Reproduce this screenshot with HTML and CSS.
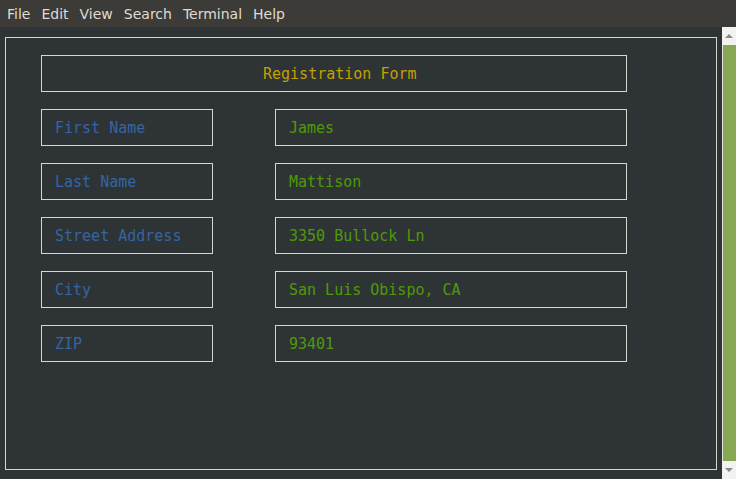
FILE: index.html
```html
<!DOCTYPE html>
<html>
<head>
<meta charset="utf-8">
<link rel="stylesheet" href="styles.css">
</head>
<body>
<div class="menubar">
  <span class="menu">File</span>
  <span class="menu">Edit</span>
  <span class="menu">View</span>
  <span class="menu">Search</span>
  <span class="menu">Terminal</span>
  <span class="menu">Help</span>
</div>
<div class="main">
  <div class="term">
    <div class="outer">
      <div class="box title">Registration Form</div>
      <div class="row"><div class="box label">First Name</div><div class="box value">James</div></div>
      <div class="row"><div class="box label">Last Name</div><div class="box value">Mattison</div></div>
      <div class="row"><div class="box label">Street Address</div><div class="box value">3350 Bullock Ln</div></div>
      <div class="row"><div class="box label">City</div><div class="box value">San Luis Obispo, CA</div></div>
      <div class="row"><div class="box label">ZIP</div><div class="box value">93401</div></div>
    </div>
  </div>
  <div class="scrollbar">
    <div class="arrow up"></div>
    <div class="thumb"></div>
    <div class="arrow down"></div>
  </div>
</div>
</body>
</html>
```
FILE: styles.css
```css
html, body {
  margin: 0;
  padding: 0;
  width: 736px;
  height: 479px;
  overflow: hidden;
  background: #2e3436;
}
.menubar {
  height: 27px;
  background: #3c3b37;
  display: flex;
  align-items: center;
  padding-left: 7px;
  gap: 11px;
  font-family: "DejaVu Sans", "Noto Sans", sans-serif;
  font-size: 14px;
  color: #dfdbd2;
  box-sizing: border-box;
}
.main {
  display: flex;
  height: 452px;
}
.term {
  width: 722px;
  padding: 10px 0 0 5px;
  box-sizing: border-box;
}
.outer {
  width: 712px;
  height: 433px;
  border: 1px solid #d3d7cf;
  box-sizing: border-box;
  padding: 17px 0 0 35px;
  display: flex;
  flex-direction: column;
  gap: 17px;
  font-family: "DejaVu Sans Mono", monospace;
  font-size: 15px;
}
.box {
  border: 1px solid #d3d7cf;
  height: 37px;
  box-sizing: border-box;
  display: flex;
  align-items: center;
  padding-top: 1px;
}
.title {
  width: 586px;
  padding-left: 221px;
  color: #c4a000;
}
.row {
  display: flex;
  gap: 62px;
}
.label {
  width: 172px;
  padding-left: 13px;
  color: #3465a4;
}
.value {
  width: 352px;
  padding-left: 13px;
  color: #4e9a06;
}
.scrollbar {
  width: 14px;
  background: #e6e6e4;
  display: flex;
  flex-direction: column;
}
.arrow {
  height: 18px;
  background: #f2f2f1;
  display: flex;
  align-items: center;
  justify-content: center;
}
.arrow::after {
  content: "";
  width: 0;
  height: 0;
  border-left: 4px solid transparent;
  border-right: 4px solid transparent;
}
.up::after {
  border-bottom: 4px solid #8a8a88;
}
.down::after {
  border-top: 4px solid #8a8a88;
}
.thumb {
  flex: 1;
  background: #87a752;
  margin-left: 1px;
}
```
